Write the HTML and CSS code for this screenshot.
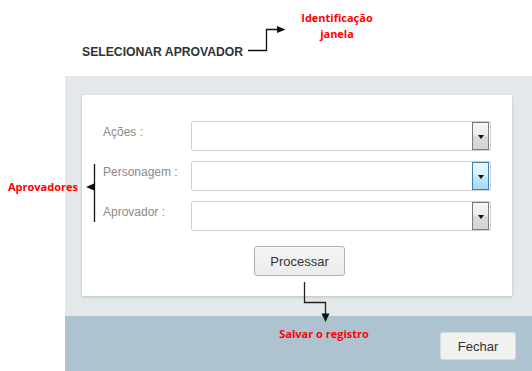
FILE: index.html
```html
<!DOCTYPE html>
<html lang="pt-BR">
<head>
    <meta charset="UTF-8">
    <meta name="viewport" content="width=device-width, initial-scale=1.0">
    <title>Selecionar Aprovador</title>
    <link rel="stylesheet" href="styles.css">
</head>
<body>
    <div class="page">
        <div class="header">
            <h1>SELECIONAR APROVADOR</h1>
        </div>

        <div class="panel">
            <div class="card">
                <div class="field-row">
                    <label>Ações :</label>
                    <div class="select"><span class="select-btn"></span></div>
                </div>
                <div class="field-row">
                    <label>Personagem :</label>
                    <div class="select"><span class="select-btn active"></span></div>
                </div>
                <div class="field-row">
                    <label>Aprovador :</label>
                    <div class="select"><span class="select-btn"></span></div>
                </div>
                <div class="actions">
                    <button class="btn btn-process">Processar</button>
                </div>
            </div>
            <div class="footer">
                <button class="btn btn-close">Fechar</button>
            </div>
        </div>

        <!-- annotation layer -->
        <svg class="notes-lines" width="532" height="371" viewBox="0 0 532 371">
            <path d="M248 50.5 H266.5 V29.5 H279" fill="none" stroke="#111" stroke-width="1.3"/>
            <polygon points="277,26 285.5,29.5 277,33" fill="#111"/>
            <path d="M94.5 164 V222" fill="none" stroke="#111" stroke-width="1.3"/>
            <polygon points="86,187 94,183.5 94,190.5" fill="#111"/>
            <path d="M304.5 282 V302.5 H325.5 V315" fill="none" stroke="#222" stroke-width="1.3"/>
            <polygon points="321.5,313.5 329.5,313.5 325.5,322" fill="#111"/>
        </svg>
        <div class="note note-title">Identificação<br>janela</div>
        <div class="note note-left">Aprovadores</div>
        <div class="note note-save">Salvar o registro</div>
    </div>
</body>
</html>
```

FILE: styles.css
```css
body {
    margin: 0;
    padding: 0;
    background-color: #fff;
    font-family: "Liberation Sans", Arial, sans-serif;
}
.page {
    position: relative;
    width: 532px;
    height: 371px;
    overflow: hidden;
}
.header {
    height: 76px;
    padding-left: 82px;
    box-sizing: border-box;
}
.header h1 {
    margin: 0;
    padding-top: 45px;
    font-size: 12.2px;
    line-height: 14px;
    font-weight: bold;
    color: #2e3338;
}
.panel {
    margin-left: 65px;
    background-color: #e3e8eb;
    padding-top: 19px;
}
.card {
    margin-left: 17px;
    width: 430px;
    box-sizing: border-box;
    background-color: #fff;
    padding: 26px 21px 20px 21px;
    box-shadow: 0 1px 3px rgba(0, 0, 0, 0.18);
    display: flex;
    flex-direction: column;
    gap: 10px;
}
.field-row {
    display: flex;
    align-items: center;
    height: 30px;
}
.field-row label {
    width: 88px;
    font-size: 12px;
    color: #8a8a8a;
    margin-top: -8px;
}
.select {
    width: 300px;
    height: 30px;
    box-sizing: border-box;
    border: 1px solid #cfcfcf;
    border-radius: 2px;
    background-color: #fff;
    display: flex;
    justify-content: flex-end;
    align-items: center;
    padding-right: 1px;
}
.select-btn {
    width: 17px;
    height: 28px;
    box-sizing: border-box;
    border: 1px solid #7b7b7b;
    background: linear-gradient(#f6f6f6 0%, #ececec 45%, #d9d9d9 55%, #d3d3d3 100%);
    display: flex;
    justify-content: center;
    align-items: center;
}
.select-btn.active {
    border-color: #3c7fb1;
    background: linear-gradient(#eaf6fd 0%, #d9f0fc 45%, #bee6fd 55%, #a7d9f5 100%);
}
.select-btn::after {
    content: "";
    border-left: 3px solid transparent;
    border-right: 3px solid transparent;
    border-top: 4px solid #111;
    margin-top: 1px;
}
.actions {
    padding-top: 5px;
    padding-left: 151px;
}
.btn {
    font-family: "Liberation Sans", Arial, sans-serif;
    font-size: 13px;
    color: #333;
    background-color: #f0f0f0;
    border: 1px solid #c4c9cf;
    border-radius: 3px;
    cursor: pointer;
}
.btn-process {
    width: 91px;
    height: 30px;
    border-color: #a9b4bf;
    background: linear-gradient(#f5f5f5, #ebebeb);
}
.footer {
    margin-top: 20px;
    height: 55px;
    background-color: #adc4d0;
    display: flex;
    justify-content: flex-end;
    align-items: flex-start;
    padding: 16px 16px 0 0;
    box-sizing: border-box;
}
.btn-close {
    width: 76px;
    height: 28px;
    border-color: #d6dde2;
    background-color: #f1f1f1;
}
.notes-lines {
    position: absolute;
    left: 0;
    top: 0;
    pointer-events: none;
}
.note {
    position: absolute;
    font-family: "Open Sans", "DejaVu Sans", sans-serif;
    font-weight: bold;
    font-size: 11px;
    line-height: 16px;
    color: #f00;
    text-align: center;
    white-space: nowrap;
}
.note-title {
    left: 297px;
    top: 10px;
    width: 80px;
}
.note-left {
    left: 4px;
    top: 179px;
    width: 78px;
}
.note-save {
    left: 274px;
    top: 326px;
    width: 100px;
}
```
